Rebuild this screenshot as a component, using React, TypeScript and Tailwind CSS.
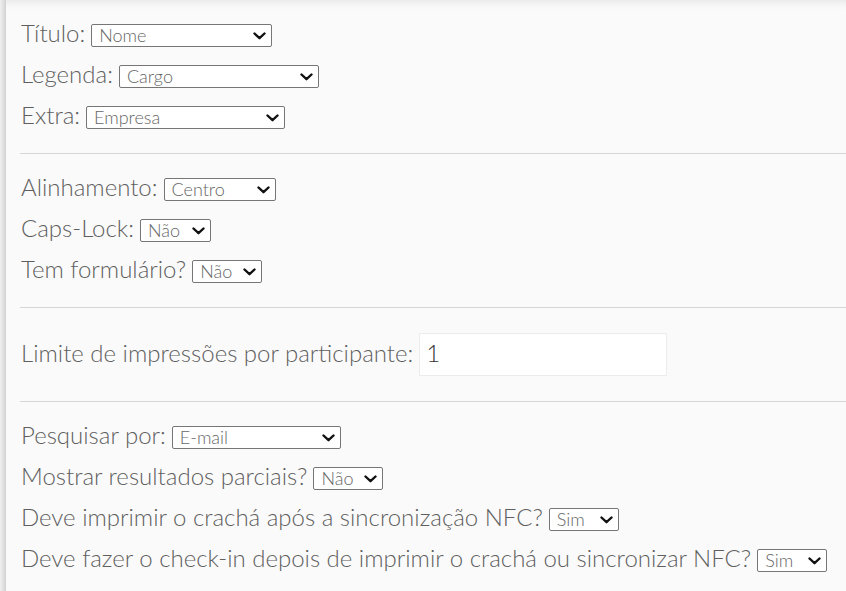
import React from 'react';

type Sel = { label: string; value: string; options: string[]; width: string };

function Chevron() {
    return (
        <svg className="pointer-events-none absolute right-[6px] top-1/2 -translate-y-1/2" width="13" height="8" viewBox="0 0 13 8" fill="none">
            <path d="M1.5 1.5 L6.5 6.2 L11.5 1.5" stroke="#111" strokeWidth="2.4" strokeLinecap="round" strokeLinejoin="round" />
        </svg>
    );
}

function SelectRow({ label, value, options, width }: Sel) {
    return (
        <div className="flex h-[41px] items-center">
            <span className="mr-[6px] mb-[6px]">{label}</span>
            <div className={'relative flex ' + width}>
                <select
                    defaultValue={value}
                    className="h-[23px] w-full appearance-none rounded-[2px] border border-[#767676] bg-white pl-[7px] pr-6 text-[18px] leading-[21px] text-[#666] outline-none"
                >
                    {options.map(o => <option key={o}>{o}</option>)}
                </select>
                <Chevron />
            </div>
        </div>
    );
}

function Divider() {
    return <div className="my-[15px] h-px bg-[#d6d6d6]" />;
}

const campos = ['Nome', 'Cargo', 'Empresa', 'E-mail', 'Telefone'];
const simNao = ['Sim', 'Não'];

export default function App() {
    return (
        <div className="flex min-h-[591px] w-full bg-[#fafafa] font-['Lato',sans-serif] font-light text-[24px] leading-[30px] text-[#5f5f5f]">
            <div className="w-[6px] shrink-0 bg-gradient-to-r from-[#f0f0f0] to-[#d2d2d2]" />
            <div className="flex-1 pt-[15px] pl-[14px] shadow-[inset_0_10px_10px_-8px_rgba(0,0,0,0.09)]">
                <div className="pl-[1px]">
                    <SelectRow label="Título:" value="Nome" options={campos} width="w-[181px]" />
                    <SelectRow label="Legenda:" value="Cargo" options={campos} width="w-[200px]" />
                    <SelectRow label="Extra:" value="Empresa" options={campos} width="w-[199px]" />
                </div>
                <Divider />
                <div className="pl-[1px]">
                    <SelectRow label="Alinhamento:" value="Centro" options={['Esquerda', 'Centro', 'Direita']} width="w-[112px]" />
                    <SelectRow label="Caps-Lock:" value="Não" options={simNao} width="w-[71px]" />
                    <SelectRow label="Tem formulário?" value="Não" options={simNao} width="w-[70px]" />
                </div>
                <Divider />
                <div className="flex items-center py-[10px] pl-[1px]">
                    <span className="mr-[6px] mb-[4px]">Limite de impressões por participante:</span>
                    <input
                        defaultValue="1"
                        className="h-[43px] w-[248px] border border-[#ececec] bg-white px-[6px] pb-[4px] text-[24px] font-light text-[#333] outline-none"
                    />
                </div>
                <Divider />
                <div className="pl-[1px]">
                    <SelectRow label="Pesquisar por:" value="E-mail" options={campos} width="w-[169px]" />
                    <SelectRow label="Mostrar resultados parciais?" value="Não" options={simNao} width="w-[70px]" />
                    <SelectRow label="Deve imprimir o crachá após a sincronização NFC?" value="Sim" options={simNao} width="w-[70px]" />
                    <SelectRow label="Deve fazer o check-in depois de imprimir o crachá ou sincronizar NFC?" value="Sim" options={simNao} width="w-[70px]" />
                </div>
            </div>
        </div>
    );
}
